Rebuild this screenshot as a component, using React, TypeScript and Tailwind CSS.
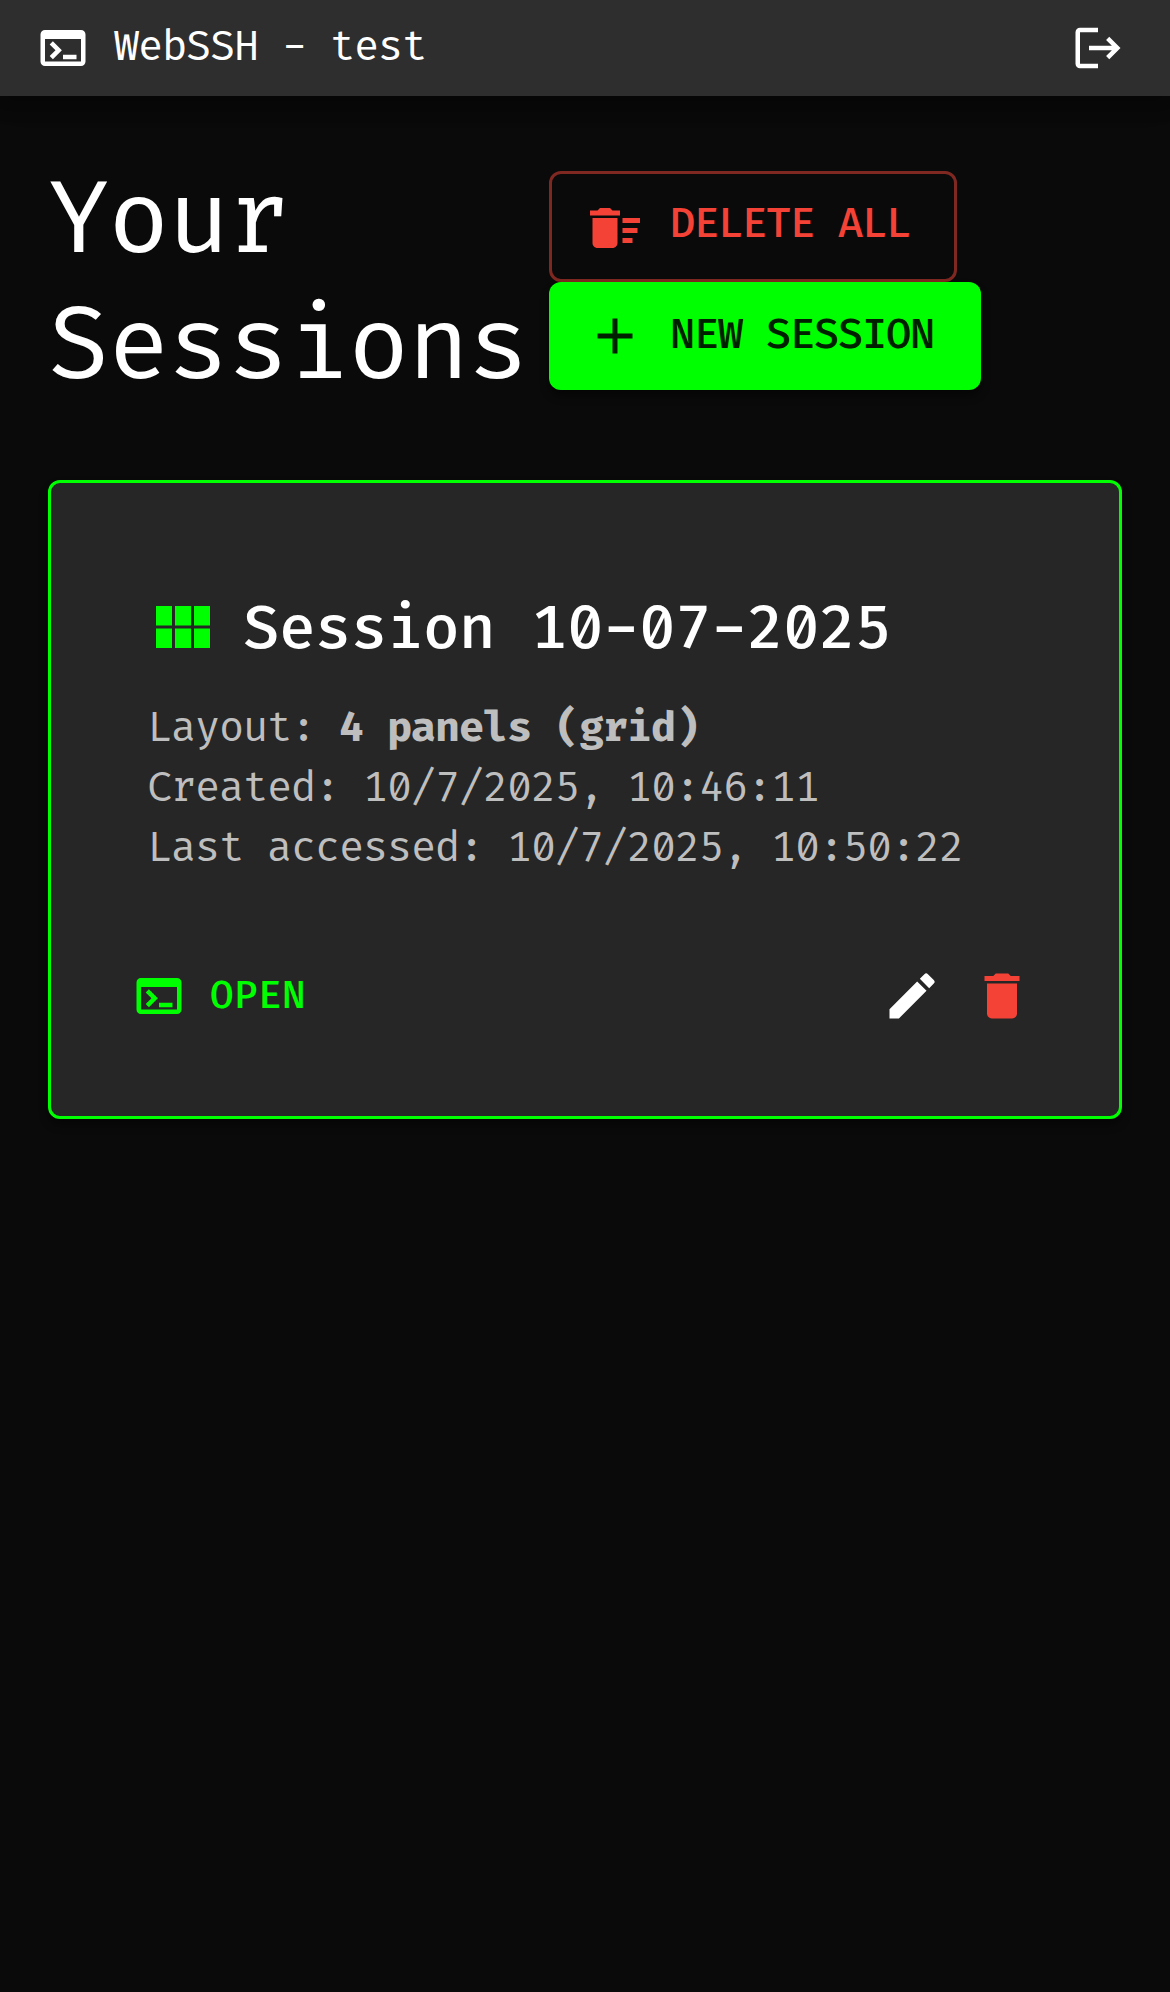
import React from 'react';
import { MdAdd, MdDelete, MdDeleteSweep, MdEdit, MdLogout, MdTerminal } from 'react-icons/md';

function GridIcon() {
  return (
    <svg viewBox="0 0 24 24" className="size-[72px] shrink-0 fill-[#00ff00]">
      <path d="M14.67 5v6.5H9.33V5zm1 6.5H21V5h-5.33zm-1 7.5v-6.5H9.33V19zm1-6.5V19H21v-6.5zm-7.34 0H3V19h5.33zm0-1V5H3v6.5z" />
    </svg>
  );
}

function TopBar() {
  return (
    <header className="relative flex h-24 items-center bg-[#2e2e2e] pr-[45px] pl-9 shadow-[0_6px_12px_-3px_rgba(0,0,0,0.2),0_12px_15px_rgba(0,0,0,0.14),0_3px_30px_rgba(0,0,0,0.12)]">
      <MdTerminal className="size-[54px] shrink-0" />
      <h1 className="ml-6 grow pb-px text-[41px] leading-[60px] tracking-[-1.23px]">WebSSH - test</h1>
      <button aria-label="Log out">
        <MdLogout className="size-[54px]" />
      </button>
    </header>
  );
}

function SessionCard() {
  return (
    <article className="mt-[69px] h-[639px] rounded-xl border-[3px] border-[#00ff00] bg-[#262626] pt-[108px] pr-[87px] pl-[81px] shadow-[0_6px_9px_rgba(0,0,0,0.4)]">
      <div className="flex items-center pl-[15px]">
        <GridIcon />
        <h3 className="ml-6 pt-[5px] text-[59.5px] leading-[66px] font-medium tracking-[-0.62px] whitespace-nowrap">
          Session 10-07-2025
        </h3>
      </div>
      <div className="mt-9 pl-[15px] text-[41px] leading-[60px] tracking-[-1.23px] whitespace-nowrap text-[#bebebe]">
        <p>
          Layout: <strong>4 panels (grid)</strong>
        </p>
        <p>Created: 10/7/2025, 10:46:11</p>
        <p>Last accessed: 10/7/2025, 10:50:22</p>
      </div>
      <div className="mt-[87px] flex items-center">
        <button className="flex items-center text-[#00ff00]">
          <MdTerminal className="size-[54px]" />
          <span className="ml-6 pt-px text-[38.3px] leading-[54px] font-medium tracking-[0.43px]">OPEN</span>
        </button>
        <div className="ml-auto flex gap-[30px]">
          <button aria-label="Edit session">
            <MdEdit className="size-[60px]" />
          </button>
          <button aria-label="Delete session" className="text-[#f44336]">
            <MdDelete className="size-[60px]" />
          </button>
        </div>
      </div>
    </article>
  );
}

export default function App() {
  return (
    <div className="min-h-[1992px] bg-[#0a0a0a] font-['Fira_Code','Fira_Mono','DejaVu_Sans_Mono',monospace] text-white">
      <TopBar />
      <main className="px-12 pt-[59px]">
        <div className="flex items-start">
          <h2 className="w-[501px] pt-1 text-[100px] leading-[126px] tracking-[-1.54px]">Your Sessions</h2>
          <div className="mt-4 flex flex-col items-start text-[41px] leading-[60px] font-medium tracking-[-1.23px] whitespace-nowrap">
            <button className="flex h-[111px] w-[408px] items-center rounded-xl border-[3px] border-[#7f2822] pl-[33px] text-[#f44336]">
              <MdDeleteSweep className="mt-[3px] size-[60px]" />
              <span className="ml-[25px] pb-[4px]">DELETE ALL</span>
            </button>
            <button className="flex h-[108px] w-[432px] items-center rounded-xl bg-[#00ff00] pl-9 text-[#002100] shadow-[0_6px_9px_rgba(0,0,0,0.45)]">
              <MdAdd className="size-[60px]" />
              <span className="ml-[25px] pb-px">NEW SESSION</span>
            </button>
          </div>
        </div>
        <SessionCard />
      </main>
    </div>
  );
}
